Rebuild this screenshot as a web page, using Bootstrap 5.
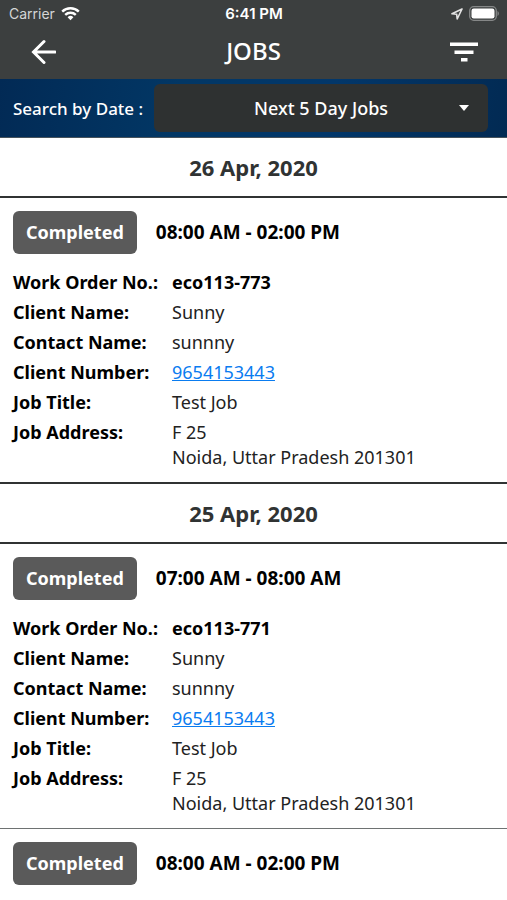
<!DOCTYPE html>
<html lang="en">
<head>
<meta charset="utf-8">
<meta name="viewport" content="width=device-width, initial-scale=1">
<title>Jobs</title>
<link href="https://cdn.jsdelivr.net/npm/bootstrap@5.3.0/dist/css/bootstrap.min.css" rel="stylesheet">
<style>
  body { font-family: "Noto Sans", sans-serif; font-size: 18px; line-height: 25px; color: #000; background: #fff; }
  .top-area { background: #3c3f3f; color: #fff; }
  .status-bar { font-family: Inter, "Liberation Sans", sans-serif; font-size: 15px; line-height: 27px; padding: 0 8px 0 9px; }
  .status-side { flex: 1 1 0; gap: 6px; }
  .carrier { color: #d4d6d6; font-size: 14px; }
  .title-bar { height: 52px; padding: 0 27px 4px; }
  .title-bar h1 { font-size: 24px; line-height: 32px; font-weight: 500; }
  .icon-btn { color: #fff; line-height: 0; width: 32px; height: 32px; }
  .search-bar { background: linear-gradient(100deg, #022a55, #023765 35%, #02376a 65%, #022a53); color: #fff; padding: 5px 19px 5px 13px; gap: 11px; border-bottom: 1px solid #47535c; }
  .search-bar label { font-size: 17px; font-weight: 500; white-space: nowrap; }
  .range-select { height: 48px; padding: 0 36px; border: 0; border-radius: 6px; color: #fff; font-size: 18px; font-weight: 500; text-align-last: center;
    background: #2e3131 url("data:image/svg+xml,%3Csvg xmlns='http://www.w3.org/2000/svg' viewBox='0 0 10 6'%3E%3Cpath d='M0 0h10L5 6z' fill='%23fff'/%3E%3C/svg%3E") no-repeat right 19px center / 10px 6px; }
  .day-title { font-size: 22px; line-height: 30px; font-weight: 700; color: #303333; padding: 14px 0; border-bottom: 2px solid #303333; }
  .job { padding: 13px 13px 12px; }
  .day-end { border-bottom: 2px solid #303333; }
  .job-end { border-bottom: 1px solid #6e7272; }
  .status-btn { height: 43px; padding: 0 13px; border: 0; border-radius: 6px; background: #5a5a5a; color: #fff; font-size: 18px; font-weight: 700; }
  .status-btn:hover { background: #4c4c4c; color: #fff; }
  .job-head { gap: 19px; margin-bottom: 16px; }
  .job-time { font-size: 19px; font-weight: 700; }
  .details { display: grid; grid-template-columns: 159px 1fr; row-gap: 5px; }
  .details dd { color: #222; }
  .details a { color: #0a7cf0; }
</style>
</head>
<body>
<header class="top-area">
  <div class="status-bar d-flex align-items-center">
    <div class="status-side d-flex align-items-center">
      <span class="carrier">Carrier</span>
      <svg width="19" height="15" viewBox="0 0 19 15" fill="none" stroke="#fff" stroke-width="2.4" aria-hidden="true">
        <path d="M1.2 5.6a11.8 11.8 0 0 1 16.6 0M4.2 8.9a7.6 7.6 0 0 1 10.6 0"/><path d="M9.5 14.2 6.6 11.3a4.1 4.1 0 0 1 5.8 0z" fill="#fff" stroke="none"/>
      </svg>
    </div>
    <span class="fw-semibold">6:41 PM</span>
    <div class="status-side d-flex align-items-center justify-content-end">
      <svg width="12" height="12" viewBox="0 0 12 12" fill="none" stroke="#e4e4e4" stroke-width="1.6" stroke-linejoin="round" aria-hidden="true"><path d="M11 1 1 5.8l4.7.5.5 4.7z"/></svg>
      <svg width="30" height="15" viewBox="0 0 30 15" aria-hidden="true"><rect x=".7" y=".7" width="26.6" height="13.6" rx="4" fill="none" stroke="#858787" stroke-width="1.3"/><rect x="2.5" y="2.5" width="23" height="10" rx="2.2" fill="#fff"/><path d="M28.5 5c1.800.8 1.800 4.200 0 5z" fill="#858787"/></svg>
    </div>
  </div>
  <div class="title-bar d-flex align-items-center justify-content-between">
    <button type="button" class="btn icon-btn p-0 border-0" aria-label="Back">
      <svg width="26" height="26" viewBox="0 0 26 26" fill="none" stroke="#fff" stroke-width="3" stroke-linecap="round" aria-hidden="true"><path d="M25 14H4M14 3.500 3.500 14 14 24.500"/></svg>
    </button>
    <h1 class="m-0">JOBS</h1>
    <button type="button" class="btn icon-btn p-0 border-0" aria-label="Filter">
      <svg width="28" height="22" viewBox="0 0 28 22" fill="#fff" aria-hidden="true"><path d="M0 2.500h28V6H0zM4.500 10.500h19V14h-19zM11 18h6.500v3.500H11z"/></svg>
    </button>
  </div>
</header>
<form class="search-bar d-flex align-items-center">
  <label for="range">Search by Date :</label>
  <select id="range" class="form-select range-select flex-fill">
    <option>Next 5 Day Jobs</option>
  </select>
</form>
<main>
  <section>
    <h2 class="day-title text-center m-0">26 Apr, 2020</h2>
    <article class="job day-end">
      <div class="job-head d-flex align-items-center">
        <button type="button" class="btn status-btn">Completed</button>
        <span class="job-time">08:00 AM - 02:00 PM</span>
      </div>
      <dl class="details m-0">
        <dt>Work Order No.:</dt><dd class="m-0 fw-bold text-black">eco113-773</dd>
        <dt>Client Name:</dt><dd class="m-0">Sunny</dd>
        <dt>Contact Name:</dt><dd class="m-0">sunnny</dd>
        <dt>Client Number:</dt><dd class="m-0"><a href="tel:9654153443">9654153443</a></dd>
        <dt>Job Title:</dt><dd class="m-0">Test Job</dd>
        <dt>Job Address:</dt><dd class="m-0">F 25<br>Noida, Uttar Pradesh 201301</dd>
      </dl>
    </article>
  </section>
  <section>
    <h2 class="day-title text-center m-0">25 Apr, 2020</h2>
    <article class="job job-end">
      <div class="job-head d-flex align-items-center">
        <button type="button" class="btn status-btn">Completed</button>
        <span class="job-time">07:00 AM - 08:00 AM</span>
      </div>
      <dl class="details m-0">
        <dt>Work Order No.:</dt><dd class="m-0 fw-bold text-black">eco113-771</dd>
        <dt>Client Name:</dt><dd class="m-0">Sunny</dd>
        <dt>Contact Name:</dt><dd class="m-0">sunnny</dd>
        <dt>Client Number:</dt><dd class="m-0"><a href="tel:9654153443">9654153443</a></dd>
        <dt>Job Title:</dt><dd class="m-0">Test Job</dd>
        <dt>Job Address:</dt><dd class="m-0">F 25<br>Noida, Uttar Pradesh 201301</dd>
      </dl>
    </article>
    <article class="job pb-0">
      <div class="job-head d-flex align-items-center mb-0">
        <button type="button" class="btn status-btn">Completed</button>
        <span class="job-time">08:00 AM - 02:00 PM</span>
      </div>
    </article>
  </section>
</main>
<script src="https://cdn.jsdelivr.net/npm/bootstrap@5.3.0/dist/js/bootstrap.bundle.min.js"></script>
</body>
</html>
